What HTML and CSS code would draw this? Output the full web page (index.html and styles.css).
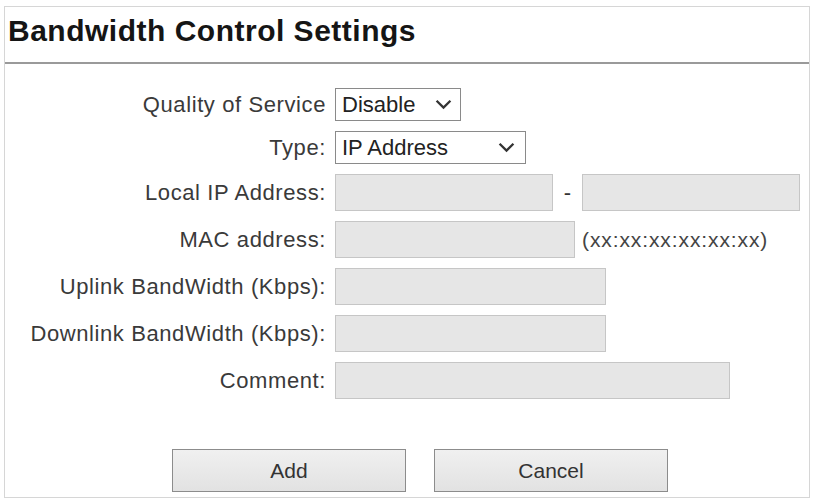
FILE: index.html
```html
<!DOCTYPE html>
<html lang="en">

<head>
    <meta charset="UTF-8">
    <title>Bandwidth Control Settings</title>
    <link rel="stylesheet" href="styles.css">
</head>

<body>

    <div class="panel">
        <h1 class="title">Bandwidth Control Settings</h1>

        <div class="form">
            <label class="label">Quality of Service</label>
            <div class="field">
                <div class="select select-qos"><span>Disable</span>
                    <svg class="chev" viewBox="0 0 16 10"><path d="M1.5 1.5 L8 8 L14.5 1.5" /></svg>
                </div>
            </div>

            <label class="label">Type:</label>
            <div class="field">
                <div class="select select-type"><span>IP Address</span>
                    <svg class="chev" viewBox="0 0 16 10"><path d="M1.5 1.5 L8 8 L14.5 1.5" /></svg>
                </div>
            </div>

            <label class="label">Local IP Address:</label>
            <div class="field">
                <input class="input w-ip" type="text" disabled>
                <span class="dash">-</span>
                <input class="input w-ip" type="text" disabled>
            </div>

            <label class="label">MAC address:</label>
            <div class="field">
                <input class="input w-mac" type="text" disabled>
                <span class="hint">(xx:xx:xx:xx:xx:xx)</span>
            </div>

            <label class="label">Uplink BandWidth (Kbps):</label>
            <div class="field">
                <input class="input w-bw" type="text" disabled>
            </div>

            <label class="label">Downlink BandWidth (Kbps):</label>
            <div class="field">
                <input class="input w-bw" type="text" disabled>
            </div>

            <label class="label">Comment:</label>
            <div class="field">
                <input class="input w-comment" type="text" disabled>
            </div>
        </div>

        <div class="buttons">
            <button class="btn">Add</button>
            <button class="btn">Cancel</button>
        </div>
    </div>

</body>

</html>
```

FILE: styles.css
```css
body {
    font-family: "Liberation Sans", Arial, sans-serif;
    background-color: #ffffff;
    color: #333333;
    margin: 0;
    padding: 6px 5px 3px 4px;
}

.panel {
    border: 1px solid #d6d6d6;
    height: 492px;
    box-sizing: border-box;
}

.title {
    margin: 0;
    height: 57px;
    padding: 7px 0 0 3px;
    box-sizing: border-box;
    font-size: 30px;
    font-weight: bold;
    color: #151515;
    letter-spacing: 0.5px;
    border-bottom: 2px solid #9a9a9a;
}

.form {
    display: grid;
    grid-template-columns: 321px 1fr;
    column-gap: 9px;
    row-gap: 10px;
    padding-top: 24px;
    align-items: center;
}

.label {
    text-align: right;
    font-size: 22px;
    letter-spacing: 0.6px;
    color: #3a3a3a;
}

.field {
    display: flex;
    align-items: center;
}

.select {
    height: 33px;
    box-sizing: border-box;
    border: 1px solid #8a8a8a;
    background-color: #ffffff;
    display: flex;
    align-items: center;
    justify-content: space-between;
    padding: 0 8px 0 6px;
    font-size: 22px;
    color: #222;
}

.select-qos {
    width: 126px;
}

.select-type {
    width: 191px;
    padding-right: 10px;
}

.chev {
    width: 17px;
    height: 11px;
    fill: none;
    stroke: #333;
    stroke-width: 2.2;
}

.input {
    height: 37px;
    box-sizing: border-box;
    border: 1px solid #c6c6c6;
    background-color: #e6e6e6;
    margin: 0;
    padding: 0;
}

.w-ip {
    width: 218px;
}

.w-mac {
    width: 240px;
}

.w-bw {
    width: 271px;
}

.w-comment {
    width: 395px;
}

.dash {
    width: 29px;
    text-align: center;
    font-size: 22px;
    color: #333;
}

.hint {
    margin-left: 7px;
    font-size: 21px;
    color: #444;
    letter-spacing: 0.9px;
}

.buttons {
    display: flex;
    gap: 28px;
    padding: 50px 0 0 167px;
}

.btn {
    width: 234px;
    height: 43px;
    border: 1px solid #8c8c8c;
    background: linear-gradient(#f0f0f0, #e2e2e2);
    font-family: "Liberation Sans", Arial, sans-serif;
    font-size: 21px;
    color: #333;
}
```
